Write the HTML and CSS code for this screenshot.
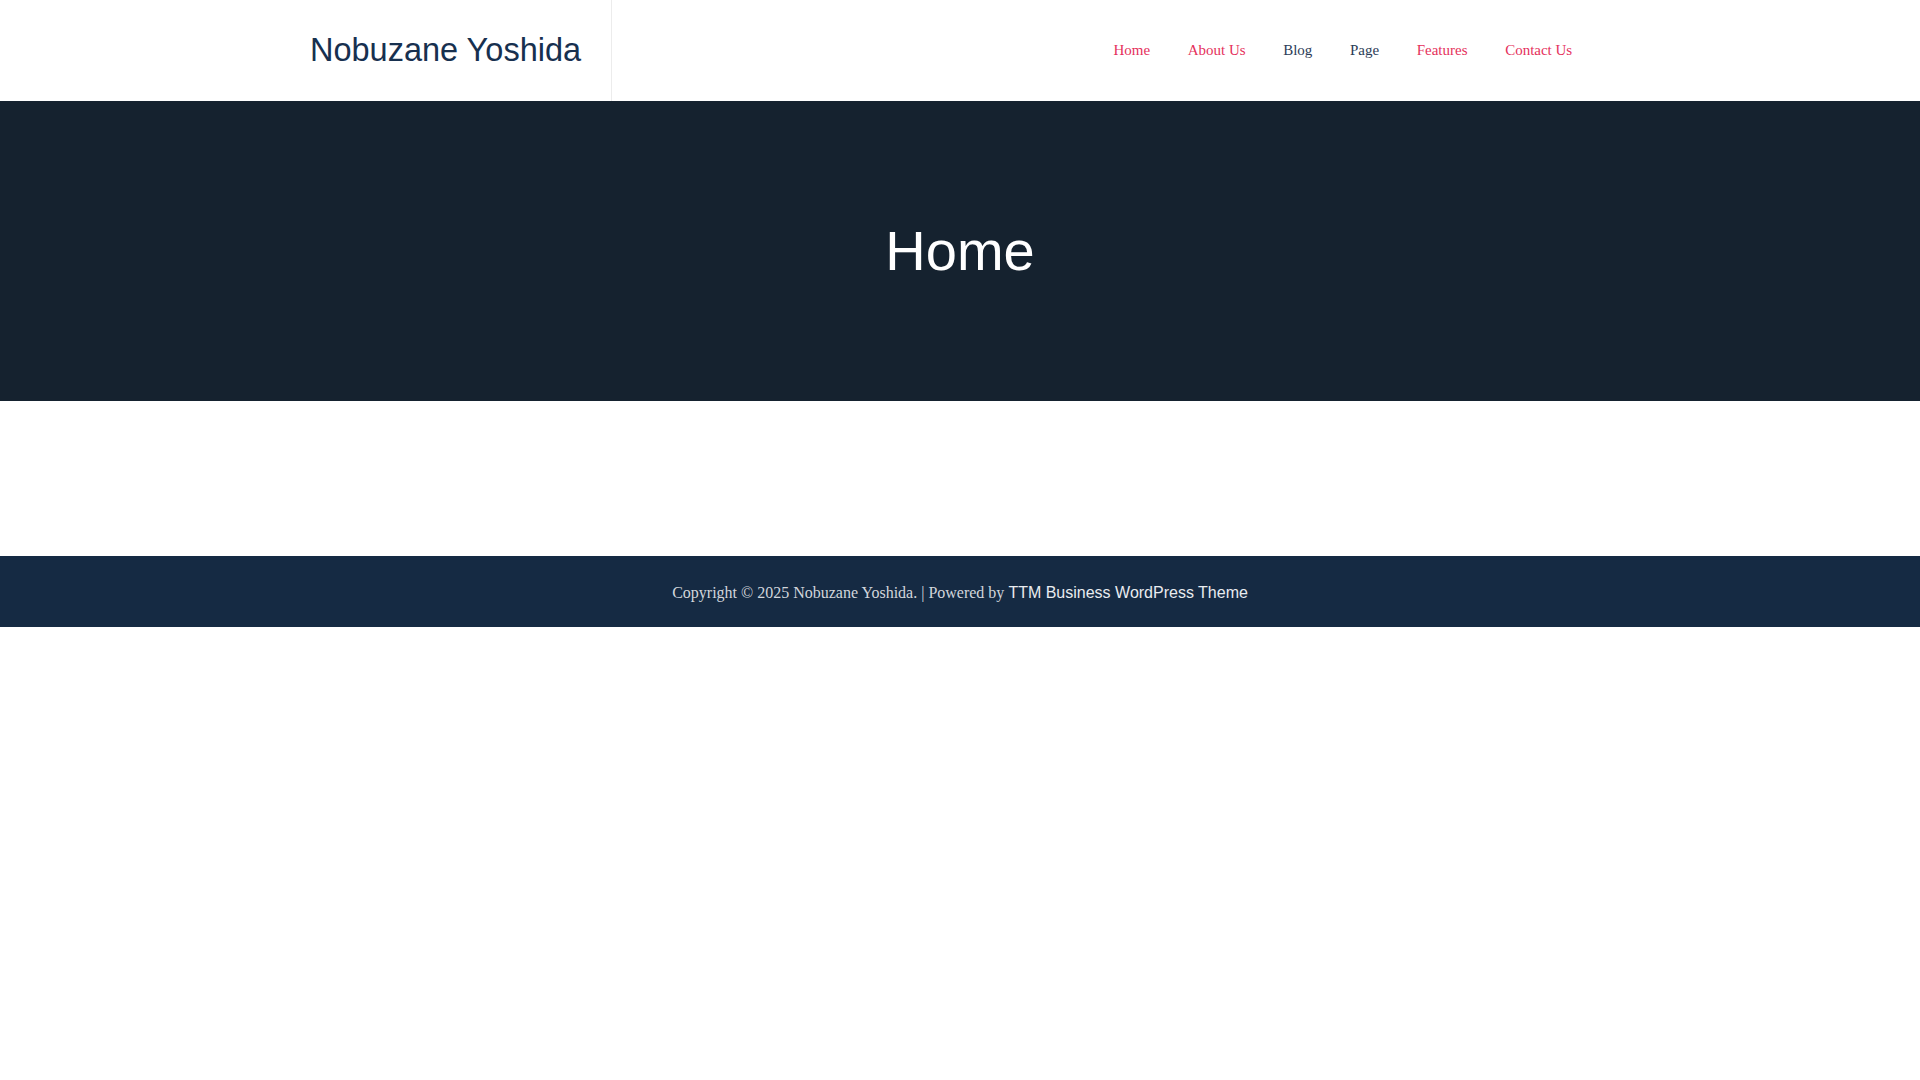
FILE: index.html
```html
<!DOCTYPE html>
<html lang="en">
<head>
<meta charset="utf-8">
<title>Nobuzane Yoshida</title>
<link rel="stylesheet" href="styles.css">
</head>
<body>
<header class="site-header">
  <div class="header-inner">
    <div class="logo"><a href="#">Nobuzane Yoshida</a></div>
    <nav class="main-nav">
      <ul>
        <li><a class="pink" href="#">Home</a></li>
        <li><a class="pink" href="#">About Us</a></li>
        <li><a class="dark" href="#">Blog</a></li>
        <li><a class="dark" href="#">Page</a></li>
        <li><a class="pink" href="#">Features</a></li>
        <li><a class="pink" href="#">Contact Us</a></li>
      </ul>
    </nav>
  </div>
</header>
<section class="hero">
  <h1>Home</h1>
</section>
<main class="content"></main>
<footer class="site-footer">
  <p>Copyright © 2025 Nobuzane Yoshida. | Powered by <a href="#">TTM Business WordPress Theme</a></p>
</footer>
</body>
</html>
```

FILE: styles.css
```css
html, body {
  margin: 0;
  padding: 0;
  background: #ffffff;
}
body {
  font-family: "Liberation Serif", "Times New Roman", serif;
  font-size: 15px;
}
a {
  text-decoration: none;
}
.site-header {
  height: 101px;
  background: #ffffff;
}
.header-inner {
  width: 1320px;
  height: 101px;
  margin: 0 auto;
  display: flex;
  align-items: center;
  justify-content: space-between;
}
.logo {
  height: 101px;
  display: flex;
  align-items: center;
  padding: 0 30px 0 10px;
  border-right: 1px solid #ececec;
}
.logo a {
  font-family: "Liberation Sans", Arial, sans-serif;
  font-size: 32.5px;
  color: #17304f;
}
.main-nav {
  padding-right: 29px;
}
.main-nav ul {
  list-style: none;
  margin: 0;
  padding: 0;
  display: flex;
  align-items: center;
}
.main-nav li a {
  display: block;
  padding: 0 18.8px;
  font-size: 15px;
}
.main-nav a.pink {
  color: #e5315c;
}
.main-nav a.dark {
  color: #2b3c57;
}
.hero {
  box-sizing: border-box;
  height: 300px;
  padding-bottom: 2px;
  background: #15222f;
  display: flex;
  align-items: center;
  justify-content: center;
}
.hero h1 {
  margin: 0;
  font-family: "Liberation Sans", Arial, sans-serif;
  font-weight: normal;
  font-size: 56px;
  color: #ffffff;
}
.content {
  display: block;
  height: 155px;
}
.site-footer {
  background: #152a43;
  padding: 25px 0 22px;
  text-align: center;
}
.site-footer p {
  margin: 0;
  font-size: 16px;
  line-height: 24px;
  color: #d2d6dc;
}
.site-footer a {
  font-family: "Liberation Sans", Arial, sans-serif;
  color: #e9ecf0;
}
```
